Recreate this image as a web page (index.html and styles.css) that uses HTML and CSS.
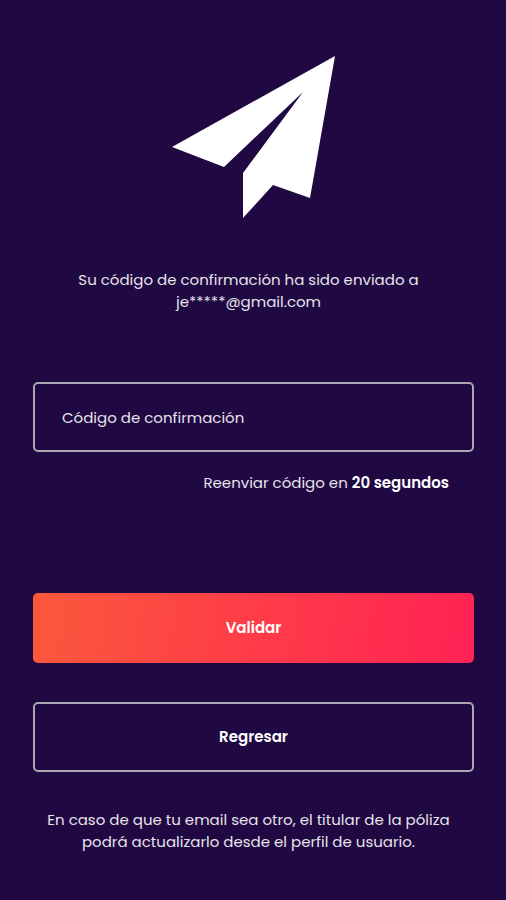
FILE: index.html
```html
<!DOCTYPE html>
<html lang="es">
<head>
<meta charset="utf-8">
<meta name="viewport" content="width=device-width, initial-scale=1">
<title>Código de confirmación</title>
<link rel="stylesheet" href="styles.css">
</head>
<body>
<main class="screen">
  <svg class="plane" viewBox="0 0 164 164" aria-hidden="true">
    <path d="M163 1 138 143 101 130 71 163V118L131 37 52 112 0 92Z"/>
  </svg>
  <p class="message">Su código de confirmación ha sido enviado a<br>je*****@gmail.com</p>
  <form class="form">
    <input class="box field" type="text" placeholder="Código de confirmación" aria-label="Código de confirmación">
    <p class="resend">Reenviar código en <strong>20 segundos</strong></p>
    <button class="box primary" type="submit">Validar</button>
    <button class="box secondary" type="button">Regresar</button>
  </form>
  <p class="message">En caso de que tu email sea otro, el titular de la póliza podrá actualizarlo desde el perfil de usuario.</p>
</main>
</body>
</html>
```
FILE: styles.css
```css
* {
  box-sizing: border-box;
}

body {
  margin: 0;
  background: #200843;
  color: #e6e3ea;
  font: 15px/22px Poppins, Inter, sans-serif;
}

.screen {
  display: flex;
  flex-direction: column;
  min-height: 100vh;
  padding: 55px 32px 32px 33px;
}

.plane {
  width: 164px;
  height: 164px;
  align-self: center;
  fill: #fff;
}

.message {
  margin: 50px 10px 0 0;
  padding: 0 8px;
  text-align: center;
}

.form {
  display: flex;
  flex-direction: column;
  margin-top: 69px;
}

.form + .message {
  margin-top: 37px;
}

.box {
  width: 100%;
  height: 70px;
  padding: 0 27px;
  border: 2px solid #aaa6b4;
  border-radius: 5px;
  background: transparent;
  color: #fff;
  font: inherit;
}

.field::placeholder {
  color: #e6e3ea;
  opacity: 1;
}

.resend {
  margin: 20px 25px 0 0;
  text-align: right;
}

.resend strong {
  color: #fff;
  font-weight: 600;
}

.primary {
  margin-top: 99px;
  border: 0;
  background: linear-gradient(100deg, #fa593c, #ff3c48 50%, #ff2254);
  font-weight: 600;
}

.secondary {
  margin-top: 39px;
  font-weight: 600;
}
```
